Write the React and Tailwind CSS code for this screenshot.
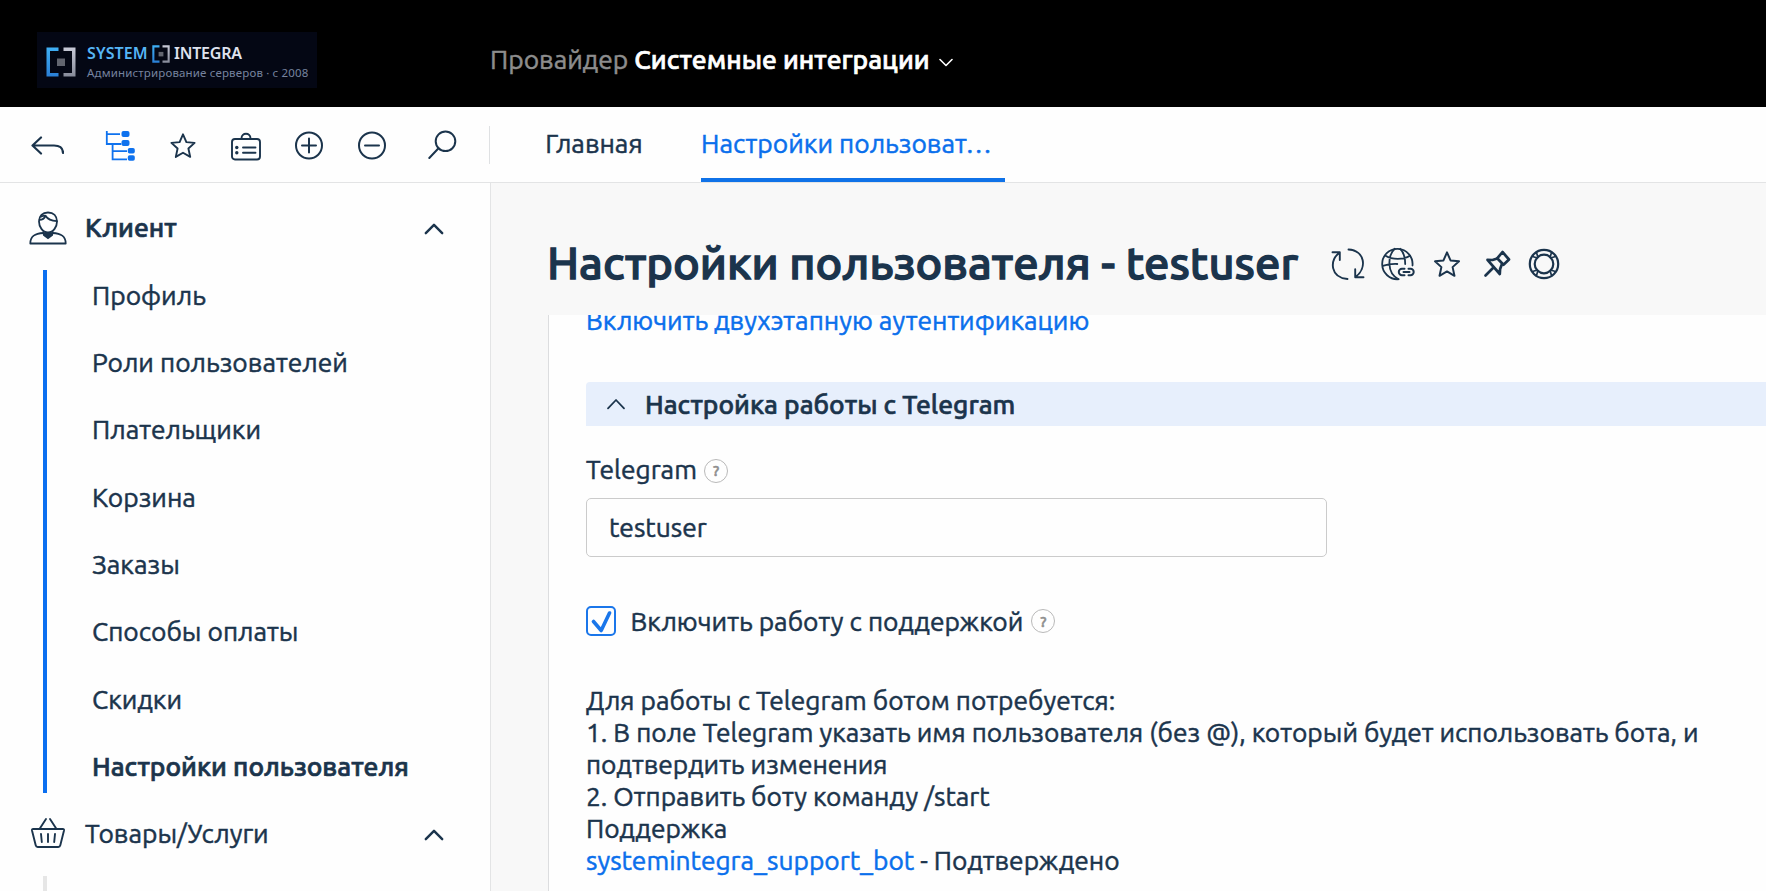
import React from "react";

const stroke = {
  fill: "none",
  stroke: "currentColor",
  strokeWidth: 2,
  strokeLinecap: "round",
  strokeLinejoin: "round",
};

function BackIcon() {
  return (
    <svg className="ml-[30px] shrink-0" width="34" height="33" viewBox="0 0 34 33" {...stroke} strokeWidth="2.200">
      <path d="M11 9.500 2.500 17.500 11 25.500M3 17.500h21c6 0 9 2.500 9 7.500" />
    </svg>
  );
}

function TreeIcon() {
  return (
    <svg className="ml-[41px] shrink-0 text-[#0f72ee]" width="32" height="33" viewBox="0 0 32 33" {...stroke} strokeWidth="1.800" strokeLinecap="butt" strokeLinejoin="miter">
      <path d="M1.800 3v13h14.500M1.800 6.200H15M7.600 16v15.400H22M7.600 23.200H22" />
      <g fill="currentColor" stroke="none">
        <rect x="16.500" y="3" width="8" height="6" rx="2" />
        <rect x="16.500" y="12" width="8" height="6" rx="2" />
        <rect x="22.800" y="20" width="7" height="5.500" rx="1.800" />
        <rect x="22.800" y="27.300" width="7" height="5.500" rx="1.800" />
      </g>
    </svg>
  );
}

const STAR = "M13 1.800 16.400 9.600 24.600 10.400 18.400 16 20.200 24.400 13 20.200 5.800 24.400 7.600 16 1.400 10.400 9.600 9.600Z";

function ClipboardIcon() {
  return (
    <svg className="ml-[34px] shrink-0" width="32" height="33" viewBox="0 0 32 33" {...stroke} strokeWidth="1.900">
      <rect x="2" y="11" width="28" height="20.500" rx="3" />
      <path d="M11.500 10.500c0-6.300 9-6.300 9 0M13 19.500h12.500M13 24.700h12.500" />
      <circle cx="6.800" cy="19.500" r="1.700" fill="currentColor" stroke="none" />
      <circle cx="6.800" cy="24.700" r="1.700" fill="currentColor" stroke="none" />
    </svg>
  );
}

function ToolbarIcons() {
  return (
    <div className="flex h-full w-[490px] shrink-0 items-center">
      <BackIcon />
      <TreeIcon />
      <svg className="ml-[33px] shrink-0" width="26" height="33" viewBox="0 -4.500 26 33" {...stroke} strokeWidth="1.900">
        <path d={STAR} />
      </svg>
      <ClipboardIcon />
      <svg className="ml-8 shrink-0" width="30" height="33" viewBox="0 0 30 33" {...stroke} strokeWidth="2">
        <circle cx="15" cy="17.500" r="13" />
        <path d="M8 17.500h14M15 10.500v14" />
      </svg>
      <svg className="ml-[33px] shrink-0" width="30" height="33" viewBox="0 0 30 33" {...stroke} strokeWidth="2">
        <circle cx="15" cy="17.500" r="13" />
        <path d="M8 17.500h14" />
      </svg>
      <svg className="ml-[41px] shrink-0" width="30" height="33" viewBox="0 0 30 33" {...stroke}>
        <circle cx="17.500" cy="13.300" r="9.800" />
        <path d="M10.500 20.300 1.300 30" />
      </svg>
      <div className="ml-[31px] h-[38px] w-px bg-[#dfe1e3]" />
    </div>
  );
}

function BracketMark({ id, size, className }) {
  return (
    <svg className={className} width={size} height={size} viewBox="0 0 30 30">
      <defs>
        <linearGradient id={id + "l"} x1="0" y1="0" x2="0" y2="1">
          <stop offset="0" stopColor="#3fb0f5" />
          <stop offset="1" stopColor="#2a7fd6" />
        </linearGradient>
        <linearGradient id={id + "r"} x1="0" y1="0" x2="0" y2="1">
          <stop offset="0" stopColor="#c9cbd8" />
          <stop offset="1" stopColor="#868a99" />
        </linearGradient>
      </defs>
      <path d="M12.500 0.500v3.500H4v22h8.500v3.500H0.500v-29z" fill={`url(#${id}l)`} />
      <path d="M17.500 0.500v3.500H26v22h-8.500v3.500h12v-29z" fill={`url(#${id}r)`} />
      <rect x="11" y="11.500" width="8" height="7.500" fill="#62656f" />
    </svg>
  );
}

function Logo() {
  return (
    <div className="flex h-14 w-[280px] shrink-0 items-start bg-[#040714] pl-[9px] font-['Noto_Sans',sans-serif] [-webkit-text-stroke:0px]">
      <BracketMark id="big" size={30} className="mt-[15px] shrink-0" />
      <div className="ml-[11px] flex flex-col pt-3">
        <div className="flex h-[19px] items-center text-[16px] leading-[19px] font-semibold whitespace-nowrap">
          <span className="w-[65px] tracking-[0.1px] text-[#56b5f5]">SYSTEM</span>
          <BracketMark id="small" size={18} className="shrink-0" />
          <span className="ml-1 tracking-[-0.2px] text-[#dfe2ee]">INTEGRA</span>
        </div>
        <div className="mt-[2px] text-[11.5px] leading-4 tracking-[0.16px] whitespace-nowrap text-[#76839f]">
          Администрирование серверов · с 2008
        </div>
      </div>
    </div>
  );
}

function Header() {
  return (
    <header className="flex h-[107px] shrink-0 bg-black pl-[37px]">
      <div className="w-[453px] pt-8">
        <Logo />
      </div>
      <div className="flex h-[118px] items-center whitespace-nowrap">
        <span className="text-[#8d8d8d]">Провайдер</span>
        <span className="ml-[6px] font-medium text-white [-webkit-text-stroke:0.7px]">Системные интеграции</span>
        <svg className="mt-[6px] ml-[9px] text-white" width="14" height="9" viewBox="0 0 14 9" {...stroke} strokeWidth="1.600">
          <path d="M1 1.500 7 7.500 13 1.500" />
        </svg>
      </div>
    </header>
  );
}

function Tabs() {
  return (
    <div className="flex h-[75px]">
      <div className="ml-14 flex w-24 justify-center pt-[21px] leading-[30px]">Главная</div>
      <div className="ml-[59px] w-[304px] border-b-4 border-[#0f72e8] pt-[21px] leading-[30px] whitespace-nowrap text-[#0a6fec]">
        Настройки пользоват…
      </div>
    </div>
  );
}

function ChevronUp({ className }) {
  return (
    <svg className={className} width="20" height="12" viewBox="0 0 20 12" {...stroke} strokeWidth="2.400">
      <path d="M1.800 10.200 10 1.800 18.200 10.200" />
    </svg>
  );
}

function PersonIcon() {
  return (
    <svg className="mt-[2px] shrink-0" width="38" height="34" viewBox="0 0 38 34" {...stroke} strokeWidth="1.800">
      <path d="M10 10.500C10 5 13.500 1.500 19 1.500S28 5 28 10.500c0 5-3.500 11-9 11s-9-6-9-11Z" />
      <path d="M10.500 8.800c3 0 5-1.600 6-4 2 3.200 6 5.200 11.300 5.400M12.500 5.500c1.700-.9 3.200-1 4.500-.5" />
      <path d="M14.500 22C6 22.500 1.300 25 1.300 32.500h35.400C36.700 25 32 22.500 23.500 22" />
      <path d="M13.600 20.300c3 2.300 7.800 2.300 10.800 0L24 24.500l-5 3.700-5-3.700Z" fill="currentColor" stroke="none" />
    </svg>
  );
}

function BasketIcon() {
  return (
    <svg className="shrink-0" width="38" height="34" viewBox="0 0 38 34" {...stroke} strokeWidth="1.900">
      <path d="M4.200 13h29.600q1.500 0 1.200 1.500l-3.700 14.800q-.4 1.700-2 1.700H8.700q-1.600 0-2-1.700L3 14.500Q2.700 13 4.200 13Z" />
      <path d="M10.500 13 17 3M27.500 13 21 3M12 18l.8 8M19 18v8M26 18l-.8 8" />
    </svg>
  );
}

const clientItems = [
  "Профиль",
  "Роли пользователей",
  "Плательщики",
  "Корзина",
  "Заказы",
  "Способы оплаты",
  "Скидки",
  "Настройки пользователя",
];

function GroupHeader({ icon, title, strong }) {
  return (
    <div className="flex h-[67.3px] items-center pl-[29px]">
      {icon}
      <span className={strong ? "ml-[18px] flex-1 font-medium [-webkit-text-stroke:0.7px]" : "ml-[18px] flex-1"}>{title}</span>
      <ChevronUp className="mt-1 mr-[46px]" />
    </div>
  );
}

function Sidebar() {
  return (
    <nav className="w-[491px] shrink-0 border-r border-[#e3e4e5] bg-[#fefefe] pt-[10.8px]">
      <GroupHeader icon={<PersonIcon />} title="Клиент" strong />
      <div className="flex pl-[43px]">
        <div className="mt-[9px] mb-[6px] w-1 bg-[#0b6ff0]" />
        <ul className="pl-[45px]">
          {clientItems.map((item, i) => (
            <li
              key={item}
              className={
                i === clientItems.length - 1
                  ? "flex h-[67.3px] items-center font-medium [-webkit-text-stroke:0.7px]"
                  : "flex h-[67.3px] items-center"
              }
            >
              {item}
            </li>
          ))}
        </ul>
      </div>
      <GroupHeader icon={<BasketIcon />} title="Товары/Услуги" />
      <div className="mt-[9px] ml-[43px] h-20 w-1 bg-[#e6e6e6]" />
    </nav>
  );
}

function HelpIcon({ className }) {
  return (
    <span
      className={
        "flex h-6 w-6 items-center justify-center rounded-full border-[1.5px] border-[#b9b9b9] text-[15px] leading-none font-medium text-[#8f8f8f] " +
        className
      }
    >
      ?
    </span>
  );
}

function TitleIcons() {
  return (
    <div className="mt-[3px] flex items-center">
      <svg width="34" height="34" viewBox="0 0 34 34" {...stroke} strokeWidth="1.900">
        <path d="M1.500 5.200h7.300v7.800M8.600 5.400C-2 14-.5 30.500 16.500 32" />
        <path d="M32.500 30.300h-8.300v-8M24.400 30.100C36.500 21 34 3.500 17.500 2.500" />
      </svg>
      <svg className="ml-4" width="34" height="34" viewBox="0 0 34 34" {...stroke} strokeWidth="1.800">
        <path d="M31.500 18.500A15.200 15.200 0 1 0 17.500 32.200" />
        <path d="M17.500 32.200C5 26 7 7.500 13.800 1.800M19.200 1.800c3.300 3.200 5 8.500 5 15.200M4.500 8.800c7 4.200 17.500 4.200 24.500 0M1.800 18.800c4.500-1.500 9.500-2 14.500-1.800" />
        <path d="M23.500 21.800H21a3.200 3.200 0 0 0 0 6.400h2.500M27.500 21.800h2a3.200 3.200 0 0 1 0 6.400h-2M22.500 25h6" strokeWidth="2" />
      </svg>
      <svg className="ml-[18px]" width="28" height="28" viewBox="-0.500 -0.500 27 27" {...stroke} strokeWidth="1.900">
        <path d={STAR} />
      </svg>
      <svg className="ml-[22px]" width="28" height="28" viewBox="0 0 28 28" {...stroke} strokeWidth="2.700">
        <path d="M19.500 2 26 9.500l-5.500 5.300-6.300-6.500Z" />
        <path d="M14.200 8.500 9.500 10l-5-.2 12.300 14.200.3-5L18.800 14.500M9.500 18.500 2.500 25.500" />
      </svg>
      <svg className="ml-[17px]" width="32" height="32" viewBox="0 0 32 32" {...stroke} strokeWidth="2.200">
        <circle cx="16" cy="16" r="14.200" />
        <circle cx="16" cy="16" r="9.300" />
        <path d="M5.300 8.700 9.400 10M8.700 5.300 10 9.400M22 9.400l1.300-4.100M22.600 10l4.100-1.300M9.400 22l-4.100 1.300M10 22.600l-1.300 4.100M22.600 22l4.100 1.300M22 22.600l1.300 4.100" strokeWidth="1.700" />
      </svg>
    </div>
  );
}

function SettingsCard() {
  return (
    <section className="ml-[57px] flex-1 overflow-hidden border-l border-[#dcdddf] bg-[#fefefe] pl-[37px]">
      <a className="-mt-[11px] block h-8 leading-8 text-[#0a6fec]">Включить двухэтапную аутентификацию</a>
      <div className="mt-[46px] flex h-11 items-center rounded-tl-[4px] bg-[#e7effc] pl-[20px] font-medium [-webkit-text-stroke:0.6px]">
        <svg width="20" height="12" viewBox="0 0 20 12" {...stroke} strokeWidth="1.800">
          <path d="M2 10.300 10 2 18 10.300" />
        </svg>
        <span className="ml-[19px]">Настройка работы с Telegram</span>
      </div>
      <div className="mt-[27px] flex h-8 items-center">
        Telegram
        <HelpIcon className="mt-[3px] ml-[7px]" />
      </div>
      <div className="mt-[13px] flex h-[59px] w-[741px] items-center rounded-[5px] border-[1.5px] border-[#cbcbcb] pb-[2px] pl-[22px]">
        testuser
      </div>
      <div className="mt-12 flex h-8 items-center">
        <span className="flex h-[30px] w-[30px] items-center justify-center rounded-[5px] border-2 border-[#1a76ea]">
          <svg className="text-[#1a76ea]" width="24" height="24" viewBox="0 0 24 24" {...stroke} strokeWidth="3.600">
            <path d="M4.500 12.500 12.200 21.500 20.500 4" />
          </svg>
        </span>
        <span className="ml-[14.5px]">Включить работу с поддержкой</span>
        <HelpIcon className="ml-[8px]" />
      </div>
      <div className="mt-[46.5px] w-[1150px] text-[26.35px] leading-[32.07px]">
        <p>Для работы с Telegram ботом потребуется:</p>
        <p>1. В поле Telegram указать имя пользователя (без @), который будет использовать бота, и подтвердить изменения</p>
        <p>2. Отправить боту команду /start</p>
        <p>Поддержка</p>
        <p>
          <a className="text-[#0a6fec]">systemintegra_support_bot</a> - Подтверждено
        </p>
      </div>
    </section>
  );
}

export default function App() {
  return (
    <div className="flex h-[891px] w-[1766px] flex-col overflow-hidden bg-[#fefefe] font-['Ubuntu','Noto_Sans',sans-serif] text-[26.4px] leading-8 text-[#1b344c] [-webkit-text-stroke:0.5px]">
      <Header />
      <div className="flex h-[76px] shrink-0 border-b border-[#e3e4e5]">
        <ToolbarIcons />
        <Tabs />
      </div>
      <div className="flex min-h-0 flex-1">
        <Sidebar />
        <main className="flex min-w-0 flex-1 flex-col bg-[#f8f8f8]">
          <div className="flex h-[132px] shrink-0 items-center pt-[27px] pl-14">
            <h1 className="text-[45.3px] leading-[50px] font-medium whitespace-nowrap [-webkit-text-stroke:1.3px]">Настройки пользователя - testuser</h1>
            <div className="ml-[33px]">
              <TitleIcons />
            </div>
          </div>
          <SettingsCard />
        </main>
      </div>
    </div>
  );
}
